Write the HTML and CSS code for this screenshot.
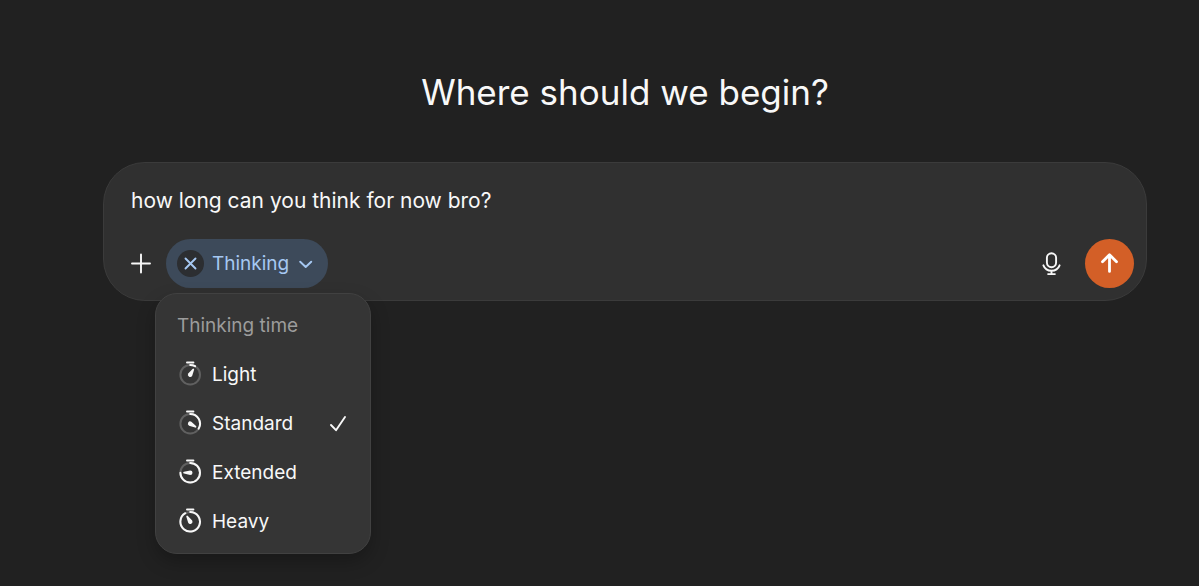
FILE: index.html
```html
<!DOCTYPE html>
<html lang="en">
  <head>
    <meta charset="utf-8">
    <meta name="viewport" content="width=device-width, initial-scale=1">
    <title>New chat</title>
    <link rel="stylesheet" href="styles.css">
  </head>
  <body>
    <main class="page">
      <h1 class="title">Where should we begin?</h1>

      <form class="composer">
        <input class="prompt" type="text" aria-label="Message" value="how long can you think for now bro?">
        <div class="toolbar">
          <button class="icon-button" type="button" aria-label="Add files">
            <svg width="21" height="21" viewBox="0 0 21 21"><path d="M11 1.5v18M2 10.5h18" /></svg>
          </button>

          <div class="mode">
            <div class="pill">
              <button class="pill-clear" type="button" aria-label="Remove thinking">
                <svg width="13" height="13" viewBox="0 0 13 13"><path d="M1.5 1.5l10 10M11.5 1.5l-10 10" /></svg>
              </button>
              <button class="pill-toggle" type="button" aria-haspopup="menu" aria-expanded="true">
                Thinking
                <svg width="14" height="8" viewBox="0 0 14 8"><path d="M1.2 1.7L6.7 7l5.5-5.3" /></svg>
              </button>
            </div>

            <div class="menu" role="menu" aria-label="Thinking time">
              <div class="menu-title">Thinking time</div>
              <button class="menu-item" type="button" role="menuitemradio" aria-checked="false">
                <svg class="timer" width="24" height="28" viewBox="0 0 24 28">
                  <path d="M9 1.5h6.4" />
                  <circle class="track" cx="12.2" cy="13.7" r="9.8" />
                  <path d="M12.2 3.9A9.8 9.8 0 0 1 17.1 5.2" />
                  <path class="hand" transform="rotate(30 12.2 13.7)" d="M12.2 6.7Q12.9 6.7 13.1 7.5L14.5 13.7A2.3 2.3 0 1 1 9.9 13.7L11.3 7.5Q11.5 6.7 12.2 6.7Z" />
                </svg>
                Light
              </button>
              <button class="menu-item" type="button" role="menuitemradio" aria-checked="true">
                <svg class="timer" width="24" height="28" viewBox="0 0 24 28">
                  <path d="M9 1.5h6.4" />
                  <circle class="track" cx="12.2" cy="13.7" r="9.8" />
                  <path d="M12.2 3.9A9.8 9.8 0 0 1 20.7 18.6" />
                  <path class="hand" transform="rotate(120 12.2 13.7)" d="M12.2 6.7Q12.9 6.7 13.1 7.5L14.5 13.7A2.3 2.3 0 1 1 9.9 13.7L11.3 7.5Q11.5 6.7 12.2 6.7Z" />
                </svg>
                Standard
                <svg class="check" width="16" height="16" viewBox="0 0 16 16"><path d="M1 9l5 5.2L15 1" /></svg>
              </button>
              <button class="menu-item" type="button" role="menuitemradio" aria-checked="false">
                <svg class="timer" width="24" height="28" viewBox="0 0 24 28">
                  <path d="M9 1.5h6.4" />
                  <circle class="track" cx="12.2" cy="13.7" r="9.8" />
                  <path d="M12.2 3.9A9.8 9.8 0 1 1 2.4 13.7" />
                  <path class="hand" transform="rotate(270 12.2 13.7)" d="M12.2 6.7Q12.9 6.7 13.1 7.5L14.5 13.7A2.3 2.3 0 1 1 9.9 13.7L11.3 7.5Q11.5 6.7 12.2 6.7Z" />
                </svg>
                Extended
              </button>
              <button class="menu-item" type="button" role="menuitemradio" aria-checked="false">
                <svg class="timer" width="24" height="28" viewBox="0 0 24 28">
                  <path d="M9 1.5h6.4" />
                  <circle class="track" cx="12.2" cy="13.7" r="9.8" />
                  <path d="M12.2 3.9A9.8 9.8 0 1 1 7.3 5.2" />
                  <path class="hand" transform="rotate(330 12.2 13.7)" d="M12.2 6.7Q12.9 6.7 13.1 7.5L14.5 13.7A2.3 2.3 0 1 1 9.9 13.7L11.3 7.5Q11.5 6.7 12.2 6.7Z" />
                </svg>
                Heavy
              </button>
            </div>
          </div>

          <div class="actions">
            <button class="icon-button" type="button" aria-label="Dictate">
              <svg width="19" height="24" viewBox="0 0 19 24">
                <rect x="4.9" y="1.2" width="9.2" height="14" rx="4.6" />
                <path d="M1.4 13.3C2.8 16.9 5.9 18.7 9.5 18.7s6.7-1.8 8.1-5.4M9.5 18.7v3.3M6.1 22.1h6.8" />
              </svg>
            </button>
            <button class="send" type="submit" aria-label="Send">
              <svg width="19" height="21" viewBox="0 0 19 21"><path d="M9.5 18.4V2M2.5 8.7l7-7 7 7" /></svg>
            </button>
          </div>
        </div>
      </form>
    </main>
  </body>
</html>
```

FILE: styles.css
```css
* {
  box-sizing: border-box;
}
body {
  margin: 0;
  background-color: #212121;
  color: #f8f8f8;
  font-family: Inter, "Liberation Sans", sans-serif;
  font-size: 19px;
}
button,
input {
  border: none;
  padding: 0;
  background: none;
  color: inherit;
  font: inherit;
}
button {
  cursor: pointer;
}
svg {
  display: block;
  flex: none;
  fill: none;
  stroke: currentColor;
  stroke-width: 1.9;
  stroke-linecap: round;
  stroke-linejoin: round;
}
.page {
  min-height: 100vh;
  padding: 68px 52px 32px 103px;
}
.title {
  margin: 0 0 46px;
  font-size: 35px;
  font-weight: 400;
  line-height: 48px;
  text-align: center;
}
.composer {
  padding: 12px;
  border: 1px solid #3b3b3b;
  border-radius: 42px;
  background-color: #303030;
}
.prompt {
  display: block;
  width: 100%;
  height: 50px;
  margin-bottom: 14px;
  padding: 0 15px;
  font-size: 21px;
  outline: none;
}
.toolbar,
.actions,
.pill,
.pill-toggle,
.menu-item {
  display: flex;
  align-items: center;
}
.toolbar {
  gap: 1px;
}
.icon-button,
.send {
  display: flex;
  align-items: center;
  justify-content: center;
  width: 49px;
  height: 49px;
  border-radius: 50%;
}
.send {
  background-color: #d35f27;
  color: #fff;
}
.send svg {
  stroke-width: 2.8;
}
.actions {
  gap: 9px;
  margin-left: auto;
}
.mode {
  position: relative;
}
.pill {
  gap: 8px;
  height: 49px;
  padding: 0 15px 0 11px;
  border-radius: 25px;
  background-color: #3d4a5a;
  color: #a6c8f2;
}
.pill-clear {
  display: flex;
  align-items: center;
  justify-content: center;
  width: 27px;
  height: 27px;
  border-radius: 50%;
  background-color: #2c2e31;
}
.pill-toggle {
  gap: 10px;
}
.menu {
  position: absolute;
  top: 54px;
  left: -11px;
  width: 216px;
  padding: 7px;
  border: 1px solid #414141;
  border-radius: 22px;
  background-color: #353535;
  box-shadow: 0 8px 18px rgba(0, 0, 0, 0.25);
}
.menu-title {
  padding: 0 14px;
  color: #9c9c9c;
  line-height: 49px;
}
.menu-item {
  gap: 10px;
  width: 100%;
  height: 49px;
  padding: 0 17px 0 15px;
  border-radius: 14px;
}
.timer {
  stroke-width: 2;
}
.timer .track {
  stroke: #606060;
}
.timer .hand {
  fill: currentColor;
  stroke: none;
}
.check {
  margin-left: auto;
}
```
